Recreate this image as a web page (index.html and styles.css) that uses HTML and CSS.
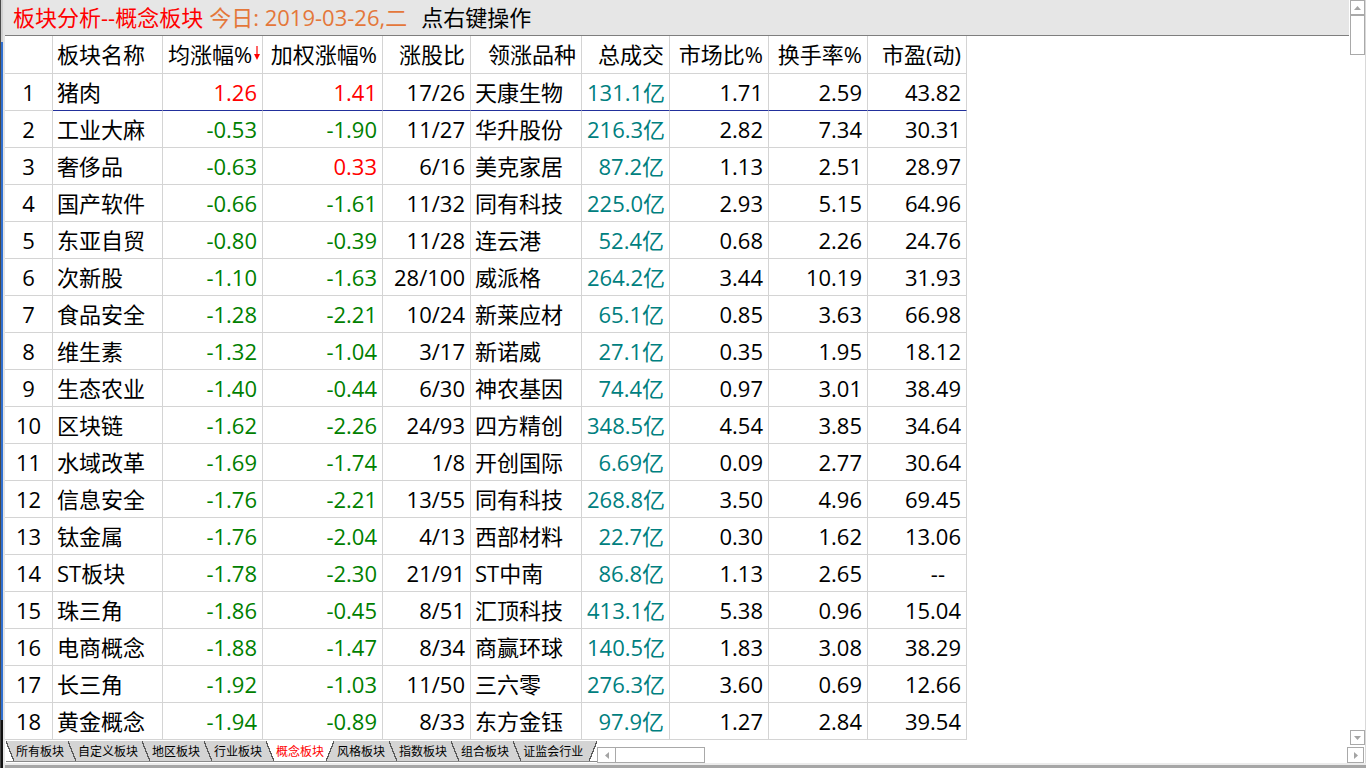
FILE: index.html
```html
<!DOCTYPE html>
<html lang="zh-CN">
<head>
  <meta charset="UTF-8" />
  <title>板块分析--概念板块</title>
  <link rel="stylesheet" href="styles.css">
</head>
<body>
  <div class="window">
    <div class="edge"></div>

    <div class="main">
      <div class="titlebar">
        <span class="t-red">板块分析--概念板块</span><span class="t-date">今日: 2019-03-26,二</span><span class="t-hint">点右键操作</span>
      </div>

      <div class="sheet">
        <div class="row head">
          <span class="no"></span>
          <span class="name">板块名称</span>
          <span class="sorted">均涨幅%<svg class="sort" width="6" height="14" viewBox="0 0 6 14"><line x1="3" y1="0" x2="3" y2="11" stroke="#f00" stroke-width="1.2"/><polygon points="0,8 6,8 3,14" fill="#f00"/></svg></span>
          <span>加权涨幅%</span>
          <span>涨股比</span>
          <span>领涨品种</span>
          <span>总成交</span>
          <span>市场比%</span>
          <span>换手率%</span>
          <span>市盈(动)</span>
        </div>

        <div class="row sel">
          <span class="no">1</span><span class="name">猪肉</span><span class="up">1.26</span><span class="up">1.41</span><span>17/26</span><span class="name">天康生物</span><span class="amt">131.1亿</span><span>1.71</span><span>2.59</span><span>43.82</span>
        </div>
        <div class="row">
          <span class="no">2</span><span class="name">工业大麻</span><span class="down">-0.53</span><span class="down">-1.90</span><span>11/27</span><span class="name">华升股份</span><span class="amt">216.3亿</span><span>2.82</span><span>7.34</span><span>30.31</span>
        </div>
        <div class="row">
          <span class="no">3</span><span class="name">奢侈品</span><span class="down">-0.63</span><span class="up">0.33</span><span>6/16</span><span class="name">美克家居</span><span class="amt">87.2亿</span><span>1.13</span><span>2.51</span><span>28.97</span>
        </div>
        <div class="row">
          <span class="no">4</span><span class="name">国产软件</span><span class="down">-0.66</span><span class="down">-1.61</span><span>11/32</span><span class="name">同有科技</span><span class="amt">225.0亿</span><span>2.93</span><span>5.15</span><span>64.96</span>
        </div>
        <div class="row">
          <span class="no">5</span><span class="name">东亚自贸</span><span class="down">-0.80</span><span class="down">-0.39</span><span>11/28</span><span class="name">连云港</span><span class="amt">52.4亿</span><span>0.68</span><span>2.26</span><span>24.76</span>
        </div>
        <div class="row">
          <span class="no">6</span><span class="name">次新股</span><span class="down">-1.10</span><span class="down">-1.63</span><span>28/100</span><span class="name">威派格</span><span class="amt">264.2亿</span><span>3.44</span><span>10.19</span><span>31.93</span>
        </div>
        <div class="row">
          <span class="no">7</span><span class="name">食品安全</span><span class="down">-1.28</span><span class="down">-2.21</span><span>10/24</span><span class="name">新莱应材</span><span class="amt">65.1亿</span><span>0.85</span><span>3.63</span><span>66.98</span>
        </div>
        <div class="row">
          <span class="no">8</span><span class="name">维生素</span><span class="down">-1.32</span><span class="down">-1.04</span><span>3/17</span><span class="name">新诺威</span><span class="amt">27.1亿</span><span>0.35</span><span>1.95</span><span>18.12</span>
        </div>
        <div class="row">
          <span class="no">9</span><span class="name">生态农业</span><span class="down">-1.40</span><span class="down">-0.44</span><span>6/30</span><span class="name">神农基因</span><span class="amt">74.4亿</span><span>0.97</span><span>3.01</span><span>38.49</span>
        </div>
        <div class="row">
          <span class="no">10</span><span class="name">区块链</span><span class="down">-1.62</span><span class="down">-2.26</span><span>24/93</span><span class="name">四方精创</span><span class="amt">348.5亿</span><span>4.54</span><span>3.85</span><span>34.64</span>
        </div>
        <div class="row">
          <span class="no">11</span><span class="name">水域改革</span><span class="down">-1.69</span><span class="down">-1.74</span><span>1/8</span><span class="name">开创国际</span><span class="amt">6.69亿</span><span>0.09</span><span>2.77</span><span>30.64</span>
        </div>
        <div class="row">
          <span class="no">12</span><span class="name">信息安全</span><span class="down">-1.76</span><span class="down">-2.21</span><span>13/55</span><span class="name">同有科技</span><span class="amt">268.8亿</span><span>3.50</span><span>4.96</span><span>69.45</span>
        </div>
        <div class="row">
          <span class="no">13</span><span class="name">钛金属</span><span class="down">-1.76</span><span class="down">-2.04</span><span>4/13</span><span class="name">西部材料</span><span class="amt">22.7亿</span><span>0.30</span><span>1.62</span><span>13.06</span>
        </div>
        <div class="row">
          <span class="no">14</span><span class="name">ST板块</span><span class="down">-1.78</span><span class="down">-2.30</span><span>21/91</span><span class="name">ST中南</span><span class="amt">86.8亿</span><span>1.13</span><span>2.65</span><span class="na">--</span>
        </div>
        <div class="row">
          <span class="no">15</span><span class="name">珠三角</span><span class="down">-1.86</span><span class="down">-0.45</span><span>8/51</span><span class="name">汇顶科技</span><span class="amt">413.1亿</span><span>5.38</span><span>0.96</span><span>15.04</span>
        </div>
        <div class="row">
          <span class="no">16</span><span class="name">电商概念</span><span class="down">-1.88</span><span class="down">-1.47</span><span>8/34</span><span class="name">商赢环球</span><span class="amt">140.5亿</span><span>1.83</span><span>3.08</span><span>38.29</span>
        </div>
        <div class="row">
          <span class="no">17</span><span class="name">长三角</span><span class="down">-1.92</span><span class="down">-1.03</span><span>11/50</span><span class="name">三六零</span><span class="amt">276.3亿</span><span>3.60</span><span>0.69</span><span>12.66</span>
        </div>
        <div class="row">
          <span class="no">18</span><span class="name">黄金概念</span><span class="down">-1.94</span><span class="down">-0.89</span><span>8/33</span><span class="name">东方金钰</span><span class="amt">97.9亿</span><span>1.27</span><span>2.84</span><span>39.54</span>
        </div>
      </div>
    </div>

    <div class="vscroll">
      <span class="sb-btn"><svg width="7" height="4" viewBox="0 0 7 4"><polygon points="0,4 7,4 3.5,0" fill="#a4a4a4"/></svg></span>
      <span class="sb-thumb"></span>
      <span class="sb-track"></span>
      <span class="sb-btn"><svg width="7" height="4" viewBox="0 0 7 4"><polygon points="0,0 7,0 3.5,4" fill="#a4a4a4"/></svg></span>
      <span class="sb-btn wide"><svg width="4" height="7" viewBox="0 0 4 7"><polygon points="0,0 4,3.5 0,7" fill="#a4a4a4"/></svg></span>
    </div>

    <div class="tabbar">
      <div class="tabs">
        <span class="tab">所有板块</span>
        <span class="tab">自定义板块</span>
        <span class="tab">地区板块</span>
        <span class="tab">行业板块</span>
        <span class="tab active">概念板块</span>
        <span class="tab">风格板块</span>
        <span class="tab">指数板块</span>
        <span class="tab">组合板块</span>
        <span class="tab last">证监会行业</span>
      </div>
      <div class="hscroll">
        <span class="hs-btn"><svg width="4" height="7" viewBox="0 0 4 7"><polygon points="4,0 0,3.5 4,7" fill="#a4a4a4"/></svg></span>
      </div>
    </div>

    <div class="rim"></div>
    <div class="statusbar"></div>
  </div>
</body>
</html>
```

FILE: styles.css
```css
* {
  box-sizing: border-box;
  margin: 0;
  padding: 0;
}

html, body {
  background: #fff;
  font-family: "Open Sans", "Noto Sans CJK SC", sans-serif;
  color: #000;
  overflow: hidden;
}

.window {
  display: grid;
  grid-template-columns: 5px 1344px 16px 1px;
  grid-template-rows: 741px 22px 5px;
  width: 1366px;
  height: 768px;
}

/* window edge behind the app */
.edge {
  grid-column: 1;
  grid-row: 1 / 4;
  background:
    linear-gradient(to right, #4a4a4a 0 1px, transparent 1px 3px, #e4e4e4 3px),
    linear-gradient(to bottom, #cfcfcf 0 42px, #2f6fd0 42px 720px, #111 720px);
}

.main {
  grid-column: 2;
  grid-row: 1;
  overflow: hidden;
}

.titlebar {
  height: 36px;
  background: #e6e6e6;
  border-bottom: 1px solid #7e7e7e;
  padding-left: 8px;
  font-size: 22px;
  line-height: 35px;
  white-space: nowrap;
}

.t-red {
  color: #f00;
}

.t-date {
  color: #e4773a;
  margin-left: 6px;
}

.t-hint {
  margin-left: 14px;
}

/* quote grid */
.sheet {
  width: 962px;
  font-size: 22px;
}

.row {
  display: grid;
  grid-template-columns: 48px 110px 100px 120px 88px 111px 88px 99px 99px 99px;
  height: 37px;
}

.row.head {
  height: 38px;
}

.row > span {
  border-right: 1px solid #d4d4d4;
  border-bottom: 1px solid #d4d4d4;
  padding: 0 5px;
  text-align: right;
  line-height: 36px;
  white-space: nowrap;
  overflow: hidden;
}

.row.head > span {
  line-height: 37px;
}

.row > .no {
  text-align: center;
  padding: 0;
}

.row > .name {
  text-align: left;
  padding-left: 4px;
}

.row.head > .sorted {
  padding-right: 4px;
}

.row.sel > span + span {
  border-bottom-color: #22309c;
}

.sort {
  margin-left: 2px;
  vertical-align: 3px;
}

.up {
  color: #f00;
}

.down {
  color: #008000;
}

.amt {
  color: #008080;
}

.row > .na {
  padding-right: 21px;
}

/* scrollbars */
.vscroll {
  grid-column: 3;
  grid-row: 1 / 3;
  display: flex;
  flex-direction: column;
  padding-left: 1px;
}

.sb-btn {
  width: 15px;
  height: 15px;
  border: 1px solid #a9a9a9;
  display: flex;
  align-items: center;
  justify-content: center;
}

.sb-btn.wide {
  width: 17px;
  height: 16px;
  margin: 2px 0 0 -3px;
}

.sb-thumb {
  width: 15px;
  height: 40px;
  border: 1px solid #a9a9a9;
}

.sb-track {
  flex: 1;
}

.rim {
  grid-column: 4;
  grid-row: 1 / 4;
  background: #d9d9d9;
}

/* sheet tabs */
.tabbar {
  grid-column: 2;
  grid-row: 2;
  display: flex;
  align-items: flex-start;
}

.tabs {
  display: flex;
  padding-left: 1px;
}

.tab {
  --prev: #d4d4d4;
  --fill: #d4d4d4;
  font-family: "Noto Sans CJK SC", sans-serif;
  font-size: 12px;
  height: 21px;
  line-height: 20px;
  padding: 0 4px 0 10px;
  border-bottom: 1px solid #8a8a8a;
  white-space: nowrap;
  background:
    linear-gradient(to top right, var(--prev) calc(50% - 0.8px), #5a5a5a calc(50% - 0.8px), #5a5a5a calc(50% + 0.6px), transparent calc(50% + 0.6px)) 0 0 / 8px 100% no-repeat,
    var(--fill);
}

.tab:first-child {
  --prev: #fff;
}

.tab.active {
  --fill: #fff;
  color: #f00;
  padding: 0 10px;
  background:
    linear-gradient(to top right, var(--prev) calc(50% - 0.8px), #5a5a5a calc(50% - 0.8px), #5a5a5a calc(50% + 0.6px), transparent calc(50% + 0.6px)) 0 0 / 8px 100% no-repeat,
    linear-gradient(to bottom right, transparent calc(50% - 0.6px), #5a5a5a calc(50% - 0.6px), #5a5a5a calc(50% + 0.8px), #d4d4d4 calc(50% + 0.8px)) 100% 0 / 8px 100% no-repeat,
    var(--fill);
}

.tab.active + .tab {
  padding-left: 3px;
  background: var(--fill);
}

.tab.last {
  padding-right: 14px;
  background:
    linear-gradient(to top right, var(--prev) calc(50% - 0.8px), #5a5a5a calc(50% - 0.8px), #5a5a5a calc(50% + 0.6px), transparent calc(50% + 0.6px)) 0 0 / 8px 100% no-repeat,
    linear-gradient(to bottom right, transparent calc(50% - 0.6px), #5a5a5a calc(50% - 0.6px), #5a5a5a calc(50% + 0.8px), #fff calc(50% + 0.8px)) 100% 0 / 8px 100% no-repeat,
    var(--fill);
}

.hscroll {
  width: 108px;
  height: 16px;
  margin-top: 6px;
  border: 1px solid #a9a9a9;
}

.hs-btn {
  width: 18px;
  height: 14px;
  border-right: 1px solid #a9a9a9;
  display: flex;
  align-items: center;
  justify-content: center;
}

.statusbar {
  grid-column: 2 / 5;
  grid-row: 3;
  border-top: 2px solid #ececec;
  background: #a6a6a6;
}
```
